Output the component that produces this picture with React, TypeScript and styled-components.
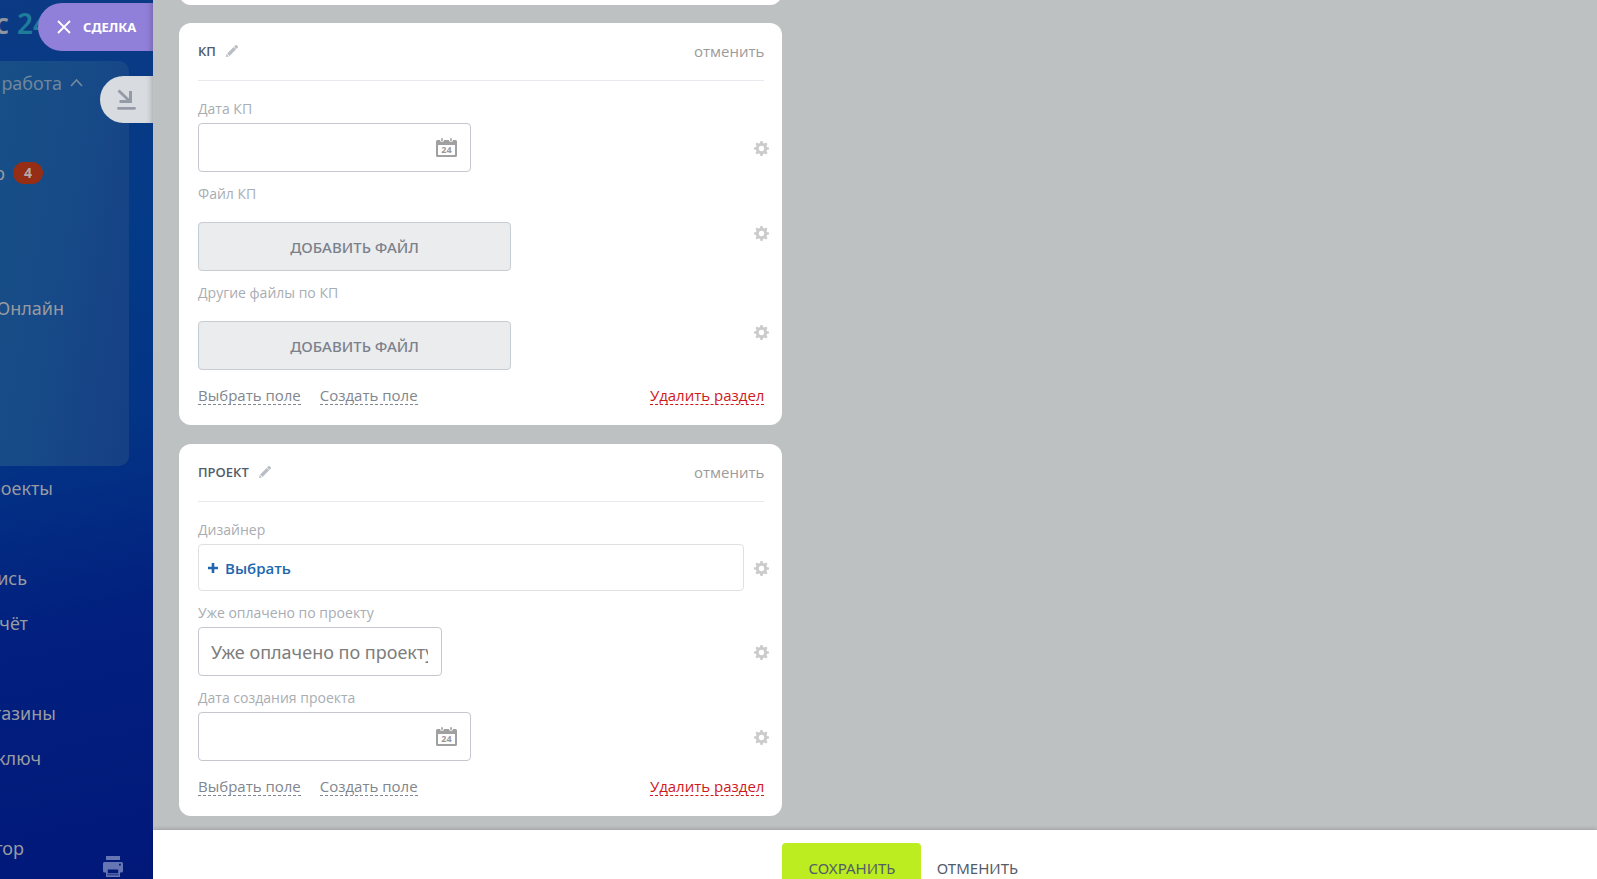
import React from "react";
import styled, { createGlobalStyle, css } from "styled-components";

const GlobalStyle = createGlobalStyle`
  *, *::before, *::after { box-sizing: border-box; }
  body {
    margin: 0;
    overflow: hidden;
    font-family: "Open Sans", "Noto Sans", sans-serif;
    color: #525c69;
  }
  button, input { font-family: inherit; }
`;

const Page = styled.div`
  display: flex;
  height: 100vh;
  overflow: hidden;
`;

/* ---------- left menu ---------- */

const Sidebar = styled.aside`
  position: relative;
  flex: 0 0 153px;
  overflow: hidden;
  font-family: "Noto Sans", "Open Sans", sans-serif;
  background: linear-gradient(168deg, #0c3a84 0%, #033a87 30%, #033385 50%, #02207f 70%, #011879 100%);
`;

const Logo = styled.div`
  display: flex;
  align-items: center;
  gap: 8px;
  height: 61px;
  padding-bottom: 16px;
  font-size: 28px;
  line-height: 32px;
  font-weight: 600;
  color: #8f969f;
`;

const LogoName = styled.span`
  display: flex;
  justify-content: flex-end;
  width: 9px;
  overflow: hidden;
`;

const LogoNumber = styled.span`
  color: #1f7d9c;
`;

const Nav = styled.nav`
  display: flex;
  flex-direction: column;
`;

const Group = styled.div`
  width: 129px;
  border-radius: 0 10px 10px 0;
  background: linear-gradient(100deg, #174f86 0%, #174b88 40%, #163f84 100%);
`;

const Row = styled.div`
  display: flex;
  align-items: center;
  gap: 8px;
  height: 45px;
  padding-bottom: 2px;
`;

const MenuLink = styled.a<{ $width: number; $dim?: boolean }>`
  display: flex;
  justify-content: flex-end;
  width: ${(p) => p.$width}px;
  overflow: hidden;
  font-size: 18px;
  line-height: 28px;
  white-space: nowrap;
  text-decoration: none;
  color: ${(p) => (p.$dim ? "#70869c" : "#989ba1")};
`;

const Counter = styled.span`
  display: flex;
  align-items: center;
  justify-content: center;
  width: 30px;
  height: 22px;
  border-radius: 11px;
  background: #952e15;
  color: #b5aaa8;
  font-size: 14px;
  font-weight: 700;
`;

const PrintButton = styled.button`
  position: absolute;
  left: 103px;
  top: 856px;
  padding: 0;
  border: 0;
  background: none;
  color: #6675b3;

  svg { display: block; }
`;

const tab = css`
  position: absolute;
  right: 0;
  display: flex;
  align-items: center;
  border: 0;
  box-shadow: inset -6px 0 6px -5px rgba(0, 0, 0, 0.25);
`;

const DealTab = styled.button`
  ${tab}
  top: 3px;
  width: 115px;
  height: 48px;
  padding: 0 0 0 19px;
  gap: 12px;
  border-radius: 24px 0 0 24px;
  background-color: #9180d9;
  color: #fff;
  font-size: 13px;
  line-height: 18px;
  font-weight: 700;
`;

const MinimizeTab = styled.button`
  ${tab}
  top: 76px;
  width: 53px;
  height: 47px;
  padding: 0 0 0 17px;
  border-radius: 24px 0 0 24px;
  background-color: #d8dce0;
  color: #959ba6;
`;

/* ---------- slider panel ---------- */

const Panel = styled.main`
  display: flex;
  flex: 1;
  flex-direction: column;
  min-width: 0;
  background: #bdc1c2;
`;

const Columns = styled.div`
  display: grid;
  grid-template-columns: 17fr 22fr;
  flex: 1;
  min-height: 0;
  overflow: hidden;
`;

const Cards = styled.div`
  display: flex;
  flex-direction: column;
  gap: 19px;
  padding-left: 26px;
`;

const PreviousCard = styled.div`
  flex: none;
  height: 24px;
  margin: -19px 0 -1px;
  border-radius: 12px;
  background: #fff;
`;

const CardBox = styled.section`
  flex: none;
  padding: 0 18px 19px 19px;
  border-radius: 12px;
  background: #fff;
`;

const CardHeader = styled.header`
  display: flex;
  align-items: center;
  justify-content: space-between;
  height: 58px;
  padding-bottom: 2px;
  border-bottom: 1px solid #e6e9ee;
`;

const TitleGroup = styled.div`
  display: flex;
  align-items: center;
  gap: 10px;
`;

const Title = styled.h2`
  margin: 0;
  font-size: 13px;
  line-height: 20px;
  font-weight: 600;
  color: #525c69;
`;

const IconButton = styled.button`
  flex: none;
  padding: 1px 0 0;
  border: 0;
  background: none;
  color: #b9bec5;

  svg { display: block; }
`;

const CancelLink = styled.a`
  font-size: 15px;
  line-height: 20px;
  text-decoration: none;
  color: #9b9b9b;
`;

const Fields = styled.div`
  display: flex;
  flex-direction: column;
  gap: 12px;
  margin-right: -5px;
  padding-top: 18px;
`;

const Field = styled.div`
  display: flex;
  flex-direction: column;
  gap: 4px;
`;

const Label = styled.label`
  font-size: 14px;
  line-height: 20px;
  color: #a8adb4;
`;

const Control = styled.div`
  display: flex;
  align-items: center;
  justify-content: space-between;
  gap: 10px;
`;

const FileControl = styled(Control)`
  align-items: flex-start;
`;

const InputWrap = styled.div<{ $width: number }>`
  display: flex;
  align-items: center;
  width: ${(p) => p.$width}px;
  height: 49px;
  padding: 0 13px 0 12px;
  border: 1px solid #c4c7cd;
  border-radius: 4px;
  background: #fff;
`;

const TextInput = styled.input`
  flex: 1;
  min-width: 0;
  height: 100%;
  padding: 0;
  border: 0;
  outline: 0;
  background: transparent;
  font-family: "Noto Sans", "Open Sans", sans-serif;
  font-size: 18px;
  color: #525c69;

  &::placeholder { color: #7d7d7d; opacity: 1; }
`;

const FileButton = styled.button`
  width: 313px;
  height: 49px;
  margin-top: 14px;
  border: 1px solid #c6cdd3;
  border-radius: 4px;
  background: #ebecee;
  color: #7b818b;
  font-size: 15px;
  line-height: 20px;
  font-family: "Noto Sans", "Open Sans", sans-serif;
  font-weight: 500;
`;

const FileSettings = styled.div`
  padding-top: 16px;
`;

const Picker = styled.button`
  display: flex;
  flex: 1;
  align-items: center;
  gap: 7px;
  height: 47px;
  padding: 0 9px;
  border: 1px solid #dfe0e3;
  border-radius: 4px;
  background: #fff;
  color: #2067b0;
  font-size: 15px;
  line-height: 20px;
  font-weight: 600;
`;

const CardFooter = styled.footer`
  display: flex;
  gap: 19px;
  padding-top: 15px;
`;

const ActionLink = styled.a<{ $danger?: boolean }>`
  height: 20px;
  margin-bottom: 1px;
  margin-left: ${(p) => (p.$danger ? "auto" : "0")};
  border-bottom: 1px dashed;
  font-size: 15px;
  line-height: 20px;
  text-decoration: none;
  color: ${(p) => (p.$danger ? "#d0181c" : "#80868e")};
`;

const ActionBar = styled.div`
  z-index: 1;
  display: grid;
  grid-template-columns: 17fr 22fr;
  flex: none;
  height: 49px;
  background: #fff;
  box-shadow: 0 -1px 4px rgba(0, 0, 0, 0.18);
`;

const Actions = styled.div`
  display: flex;
  grid-column: 2;
  padding-top: 13px;
`;

const BarButton = styled.button<{ $primary?: boolean }>`
  height: 49px;
  width: ${(p) => (p.$primary ? "139px" : "112px")};
  padding: 0;
  border: 0;
  border-radius: 4px;
  background: ${(p) => (p.$primary ? "#bbed21" : "transparent")};
  color: #535c69;
  font-size: 15px;
  line-height: 20px;
  font-family: "Noto Sans", "Open Sans", sans-serif;
  font-weight: 400;
`;

/* ---------- icons ---------- */

const Gear = () => (
  <svg width="15" height="15" viewBox="0 0 15 15" aria-hidden="true">
    <g fill="#cbcbcb">
      {[0, 45, 90, 135, 180, 225, 270, 315].map((a) => (
        <path key={a} d="M5.900 2.600 6.500 0h2l.6 2.600z" transform={`rotate(${a} 7.500 7.500)`} />
      ))}
    </g>
    <circle cx="7.500" cy="7.500" r="4.200" fill="none" stroke="#cbcbcb" strokeWidth="2.900" />
  </svg>
);

const Pencil = () => (
  <svg width="12" height="12" viewBox="0 0 12 12" aria-hidden="true">
    <path d="M0 12 .6 9.100 2.900 11.400zM1.100 8.500 7.700 1.900 10.100 4.300 3.500 10.900zM8.100 1.500 9.300.3a1 1 0 0 1 1.400 0l1 1a1 1 0 0 1 0 1.400L10.500 3.900z" fill="currentColor" />
  </svg>
);

const Calendar = () => (
  <svg width="21" height="19" viewBox="0 0 21 19" aria-hidden="true">
    <path fillRule="evenodd" d="M1.500 2H4a2 2 0 0 0 4 0h5a2 2 0 0 0 4 0h2.500A1.500 1.500 0 0 1 21 3.500v14A1.500 1.500 0 0 1 19.500 19h-18A1.500 1.500 0 0 1 0 17.500v-14A1.500 1.500 0 0 1 1.500 2zM2 7v10h17V7z" fill="#a0a0a0" />
    <path d="M6 .8v1.800M15 .8v1.800" stroke="#a0a0a0" strokeWidth="1.600" strokeLinecap="round" />
    <text x="10.500" y="15" textAnchor="middle" fontSize="9" fontWeight="700" fontFamily="Open Sans" fill="#999">24</text>
  </svg>
);

const Cross = () => (
  <svg width="14" height="14" viewBox="0 0 14 14" aria-hidden="true">
    <path d="M1 1l12 12M13 1 1 13" stroke="#fff" strokeWidth="1.800" />
  </svg>
);

const ArrowDown = () => (
  <svg width="19" height="21" viewBox="0 0 19 21" aria-hidden="true">
    <path d="M1.500 1.500l11.500 11M13.500 2v10.600H2.500" fill="none" stroke="currentColor" strokeWidth="3" />
    <path d="M1.500 19.300h16" stroke="currentColor" strokeWidth="2.800" strokeLinecap="round" />
  </svg>
);

const Chevron = () => (
  <svg width="13" height="9" viewBox="0 0 13 9" aria-hidden="true">
    <path d="M1 8l5.500-6L12 8" fill="none" stroke="#70869c" strokeWidth="1.800" />
  </svg>
);

const Printer = () => (
  <svg width="20" height="21" viewBox="0 0 20 21" aria-hidden="true">
    <path d="M3 0h14v4H3z" fill="currentColor" />
    <path fillRule="evenodd" d="M1.500 6h17A1.500 1.500 0 0 1 20 7.500V15a1.500 1.500 0 0 1-1.500 1.500H17V21H3v-4.500H1.500A1.500 1.500 0 0 1 0 15V7.500A1.500 1.500 0 0 1 1.500 6zM4.800 13.500v3.800h10.400v-3.800zM16 7.700v1.800h1.800V7.700zM4 18.600v.7h12v-.7z" fill="currentColor" />
  </svg>
);

const Plus = () => (
  <svg width="10" height="10" viewBox="0 0 10 10" aria-hidden="true">
    <path d="M5 0v10M0 5h10" stroke="currentColor" strokeWidth="2.600" />
  </svg>
);

/* ---------- parts ---------- */

const Settings = () => (
  <IconButton type="button" aria-label="Настройки поля"><Gear /></IconButton>
);

const MenuRow = ({ text, width, count }: { text?: string; width?: number; count?: number }) => (
  <Row>
    {text && <MenuLink href="#" $width={width ?? 0}>{text}</MenuLink>}
    {count && <Counter>{count}</Counter>}
  </Row>
);

const DateField = ({ id, label }: { id: string; label: string }) => (
  <Field>
    <Label htmlFor={id}>{label}</Label>
    <Control>
      <InputWrap $width={273}>
        <TextInput id={id} type="text" />
        <Calendar />
      </InputWrap>
      <Settings />
    </Control>
  </Field>
);

const FileField = ({ id, label }: { id: string; label: string }) => (
  <Field>
    <Label htmlFor={id}>{label}</Label>
    <FileControl>
      <FileButton id={id} type="button">ДОБАВИТЬ ФАЙЛ</FileButton>
      <FileSettings><Settings /></FileSettings>
    </FileControl>
  </Field>
);

const Card = ({ title, children }: { title: string; children: React.ReactNode }) => (
  <CardBox>
    <CardHeader>
      <TitleGroup>
        <Title>{title}</Title>
        <IconButton type="button" aria-label="Переименовать раздел"><Pencil /></IconButton>
      </TitleGroup>
      <CancelLink href="#">отменить</CancelLink>
    </CardHeader>
    <Fields>{children}</Fields>
    <CardFooter>
      <ActionLink href="#">Выбрать поле</ActionLink>
      <ActionLink href="#">Создать поле</ActionLink>
      <ActionLink href="#" $danger>Удалить раздел</ActionLink>
    </CardFooter>
  </CardBox>
);

export default function App() {
  return (
    <Page>
      <GlobalStyle />
      <Sidebar>
        <Logo><LogoName>с</LogoName><LogoNumber>24</LogoNumber></Logo>
        <Nav>
          <Group>
            <Row>
              <MenuLink href="#" $width={62} $dim>работа</MenuLink>
              <Chevron />
            </Row>
            <MenuRow />
            <MenuRow text="р" width={5} count={4} />
            <MenuRow />
            <MenuRow />
            <MenuRow text="Онлайн" width={64} />
            <MenuRow />
            <MenuRow />
            <MenuRow />
          </Group>
          <MenuRow text="роекты" width={53} />
          <MenuRow />
          <MenuRow text="ись" width={27} />
          <MenuRow text="тчёт" width={28} />
          <MenuRow />
          <MenuRow text="газины" width={56} />
          <MenuRow text="ключ" width={41} />
          <MenuRow />
          <MenuRow text="тор" width={24} />
        </Nav>
        <PrintButton type="button" aria-label="Печать"><Printer /></PrintButton>
        <DealTab type="button"><Cross />СДЕЛКА</DealTab>
        <MinimizeTab type="button" aria-label="Свернуть"><ArrowDown /></MinimizeTab>
      </Sidebar>
      <Panel>
        <Columns>
          <Cards>
            <PreviousCard />
            <Card title="КП">
              <DateField id="kp-date" label="Дата КП" />
              <FileField id="kp-file" label="Файл КП" />
              <FileField id="kp-other" label="Другие файлы по КП" />
            </Card>
            <Card title="ПРОЕКТ">
              <Field>
                <Label htmlFor="designer">Дизайнер</Label>
                <Control>
                  <Picker id="designer" type="button"><Plus />Выбрать</Picker>
                  <Settings />
                </Control>
              </Field>
              <Field>
                <Label htmlFor="paid">Уже оплачено по проекту</Label>
                <Control>
                  <InputWrap $width={244}>
                    <TextInput id="paid" type="text" placeholder="Уже оплачено по проекту" />
                  </InputWrap>
                  <Settings />
                </Control>
              </Field>
              <DateField id="project-date" label="Дата создания проекта" />
            </Card>
          </Cards>
        </Columns>
        <ActionBar>
          <Actions>
            <BarButton type="button" $primary>СОХРАНИТЬ</BarButton>
            <BarButton type="button">ОТМЕНИТЬ</BarButton>
          </Actions>
        </ActionBar>
      </Panel>
    </Page>
  );
}
